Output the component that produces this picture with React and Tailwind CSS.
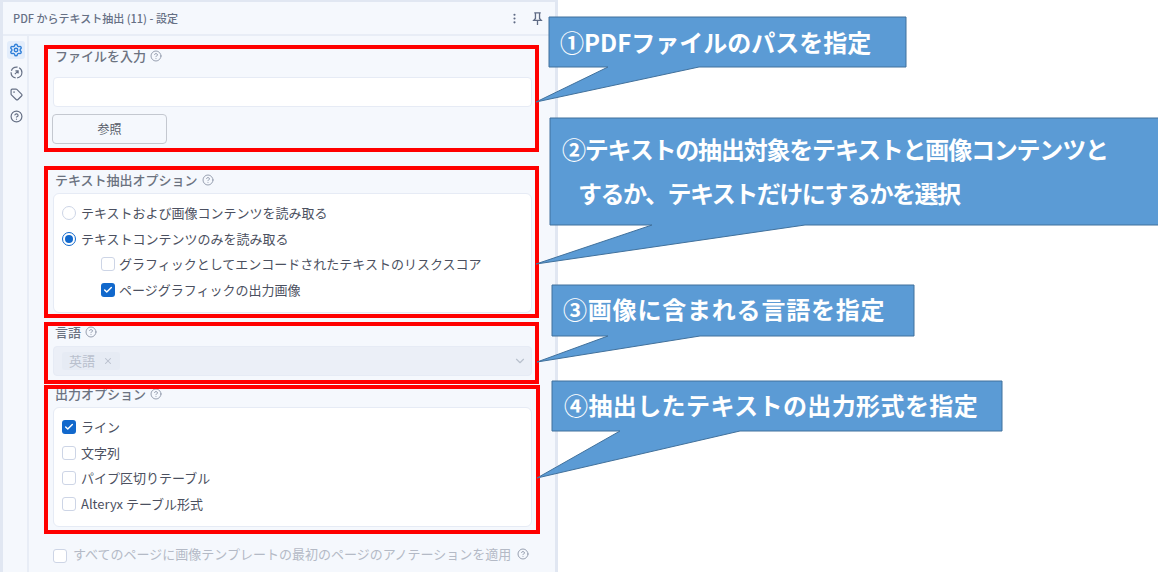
import React from "react";
import { Settings, Tag, CircleHelp, EllipsisVertical, ChevronDown, X, Check } from "lucide-react";

const font = "font-['Noto_Sans_CJK_JP','Noto_Sans',sans-serif]";

function Help() {
  return <CircleHelp className="w-[12px] h-[12px] text-[#8d96a8]" strokeWidth={1.8} />;
}

function FieldLabel({ children, className = "" }) {
  return (
    <div className={`h-5 pl-[2px] flex items-center gap-1 text-[13px] font-medium text-[#6b7280] ${className}`}>
      <span>{children}</span>
      <Help />
    </div>
  );
}

function CheckBox({ checked, className = "" }) {
  if (checked) {
    return (
      <span className={`w-[14px] h-[14px] rounded-[3px] bg-[#1168cc] flex items-center justify-center shrink-0 ${className}`}>
        <Check className="w-[10px] h-[10px] text-white" strokeWidth={3.5} />
      </span>
    );
  }
  return <span className={`w-[14px] h-[14px] rounded-[3px] border border-[#cdd5e6] bg-white shrink-0 ${className}`} />;
}

function Row({ children, indent = false, control }) {
  return (
    <div className={`h-[25.7px] flex items-center text-[13px] text-[#4b5060] ${indent ? "pl-[39px] gap-1" : "gap-[5px]"}`}>
      {control}
      <span>{children}</span>
    </div>
  );
}

function RedBox({ className }) {
  return <div className={`absolute border-4 border-[#ff0000] ${className}`} />;
}

// callout tail + body are one svg so the outline runs around both
function Callout({ className, viewBox, points, children, textClass }) {
  return (
    <div className={`absolute ${className}`}>
      <svg className="absolute inset-0 w-full h-full overflow-visible" viewBox={viewBox}>
        <polygon points={points} fill="#5b9bd5" stroke="#41719c" strokeWidth="1" />
      </svg>
      <div className={`relative font-bold text-white text-[24px] whitespace-nowrap ${textClass}`}>{children}</div>
    </div>
  );
}

export default function App() {
  return (
    <div className={`relative w-[1158px] h-[572px] overflow-hidden bg-white ${font}`}>
      {/* tool panel */}
      <div className="w-[558px] h-[572px] flex flex-col bg-[#f5f8fd] border-l-[3px] border-t-[2px] border-r-[3px] border-[#e1e7f2]">
        <div className="h-[34px] shrink-0 flex items-center justify-between pl-[10px] pr-[11px] border-b-[2px] border-[#e8edf6]">
          <div className="text-[11px] font-medium text-[#667085]">PDF からテキスト抽出 (11) - 設定</div>
          <div className="flex items-center gap-[10px] text-[#5f6b85]">
            <EllipsisVertical className="w-[13px] h-[13px]" strokeWidth={2} />
            <svg className="w-[13px] h-[13px]" viewBox="0 0 14 14" fill="none" stroke="currentColor" strokeWidth="1.4">
              <path d="M3.5 1h7M4.8 1v6L3 9h8L9.2 7V1M7 9v5" />
            </svg>
          </div>
        </div>
        <div className="flex-1 flex min-h-0">
          <div className="w-[26px] shrink-0 border-r-[2px] border-[#e8edf6] pl-1 pt-[5px] flex flex-col gap-1 text-[#667085]">
            <div className="w-[18px] h-[18px] rounded-[3px] bg-[#e3edfb] flex items-center justify-center text-[#2f7fd8]">
              <Settings className="w-[14px] h-[14px]" strokeWidth={2.4} />
            </div>
            <div className="w-[18px] h-[18px] flex items-center justify-center">
              <svg className="w-[13px] h-[13px]" viewBox="0 0 24 24" fill="none" stroke="currentColor" strokeWidth="2.2">
                <circle cx="12" cy="12" r="10" strokeDasharray="14 3" />
                <path d="M9 15l6-6M10 9h5v5" />
              </svg>
            </div>
            <div className="w-[18px] h-[18px] flex items-center justify-center">
              <Tag className="w-[13px] h-[13px]" strokeWidth={2.2} />
            </div>
            <div className="w-[18px] h-[18px] flex items-center justify-center">
              <CircleHelp className="w-[13px] h-[13px]" strokeWidth={2.2} />
            </div>
          </div>

          <div className="flex-1 pl-[24px] pr-[23px] pt-[10px]">
            <FieldLabel>ファイルを入力</FieldLabel>
            <div className="mt-[11px] h-[30px] rounded-[4px] bg-white border border-[#e6ebf5]" />
            <button className="mt-[7px] -ml-px h-[30px] w-[115px] rounded-[4px] border border-[#c4c8d0] bg-[#f5f8fd] text-[12px] text-[#555b68] flex items-center justify-center">
              参照
            </button>

            <FieldLabel className="mt-[26px]">テキスト抽出オプション</FieldLabel>
            <div className="mt-[3px] h-[120px] rounded-[6px] bg-white border border-[#e6ebf5] pl-[8px] pt-[6px]">
              <Row control={<span className="w-[14px] h-[14px] rounded-full border border-[#cdd5e6] bg-white shrink-0" />}>
                テキストおよび画像コンテンツを読み取る
              </Row>
              <Row
                control={
                  <span className="w-[14px] h-[14px] rounded-full border border-[#1168cc] bg-white shrink-0 flex items-center justify-center">
                    <span className="w-2 h-2 rounded-full bg-[#1168cc]" />
                  </span>
                }
              >
                テキストコンテンツのみを読み取る
              </Row>
              <Row indent control={<CheckBox />}>
                グラフィックとしてエンコードされたテキストのリスクスコア
              </Row>
              <Row indent control={<CheckBox checked />}>
                ページグラフィックの出力画像
              </Row>
            </div>

            <FieldLabel className="mt-[9px]">言語</FieldLabel>
            <div className="mt-1 h-[30px] rounded-[4px] bg-[#ebeff7] border border-[#e6ebf5] flex items-center justify-between pl-[8px] pr-[4px]">
              <div className="h-[18px] px-[7px] rounded-[3px] bg-[#e6ebf4] flex items-center gap-[8px] text-[13px] text-[#b9c0cd]">
                <span>英語</span>
                <X className="w-[10px] h-[10px]" strokeWidth={2.5} />
              </div>
              <ChevronDown className="w-[14px] h-[14px] text-[#b9c0cd]" />
            </div>

            <FieldLabel className="mt-2">出力オプション</FieldLabel>
            <div className="mt-[3px] h-[120px] rounded-[6px] bg-white border border-[#e6ebf5] pl-[8px] pt-[6px]">
              <Row control={<CheckBox checked />}>ライン</Row>
              <Row control={<CheckBox />}>文字列</Row>
              <Row control={<CheckBox />}>パイプ区切りテーブル</Row>
              <Row control={<CheckBox />}>Alteryx テーブル形式</Row>
            </div>

            <div className="mt-[17px] h-5 flex items-center gap-[6px] text-[13px] text-[#b4bac6]">
              <CheckBox className="mt-[3px]" />
              <span className="-mt-[1px]">すべてのページに画像テンプレートの最初のページのアノテーションを適用</span>
              <Help />
            </div>
          </div>
        </div>
      </div>

      {/* annotation overlay */}
      <RedBox className="left-[44px] top-[45px] w-[495px] h-[107px]" />
      <RedBox className="left-[44px] top-[166px] w-[495px] h-[152px]" />
      <RedBox className="left-[44px] top-[322px] w-[495px] h-[62px]" />
      <RedBox className="left-[44px] top-[385px] w-[496px] h-[149px]" />

      <Callout
        className="left-[549px] top-[17px] w-[357px] h-[50px]"
        viewBox="0 0 357 50"
        points="0,0 357,0 357,50 150,50 -13,85 59,50 0,50"
        textClass="pl-[11px] pt-[6px] leading-[38px]"
      >
        ①PDFファイルのパスを指定
      </Callout>
      <Callout
        className="left-[550px] top-[118px] w-[608px] h-[107px]"
        viewBox="0 0 608 107"
        points="0,0 609,0 609,107 255,107 -14,146 102,107 0,107"
        textClass="pl-[12px] pt-[9px] leading-[44px]"
      >
        <div className="tracking-[-1.2px]">②テキストの抽出対象をテキストと画像コンテンツと</div>
        <div className="pl-[16px] tracking-[-1.5px]">するか、テキストだけにするかを選択</div>
      </Callout>
      <Callout
        className="left-[552px] top-[285px] w-[362px] h-[51px]"
        viewBox="0 0 362 51"
        points="0,0 362,0 362,51 148,51 -15,77 56,51 0,51"
        textClass="pl-[11px] pt-[5px] leading-[38px] tracking-[0.8px]"
      >
        ③画像に含まれる言語を指定
      </Callout>
      <Callout
        className="left-[552px] top-[381px] w-[450px] h-[50px]"
        viewBox="0 0 450 50"
        points="0,0 450,0 450,50 188,50 -15,97 68,50 0,50"
        textClass="pl-[12px] pt-[5px] leading-[38px] tracking-[0.4px]"
      >
        ④抽出したテキストの出力形式を指定
      </Callout>
    </div>
  );
}
